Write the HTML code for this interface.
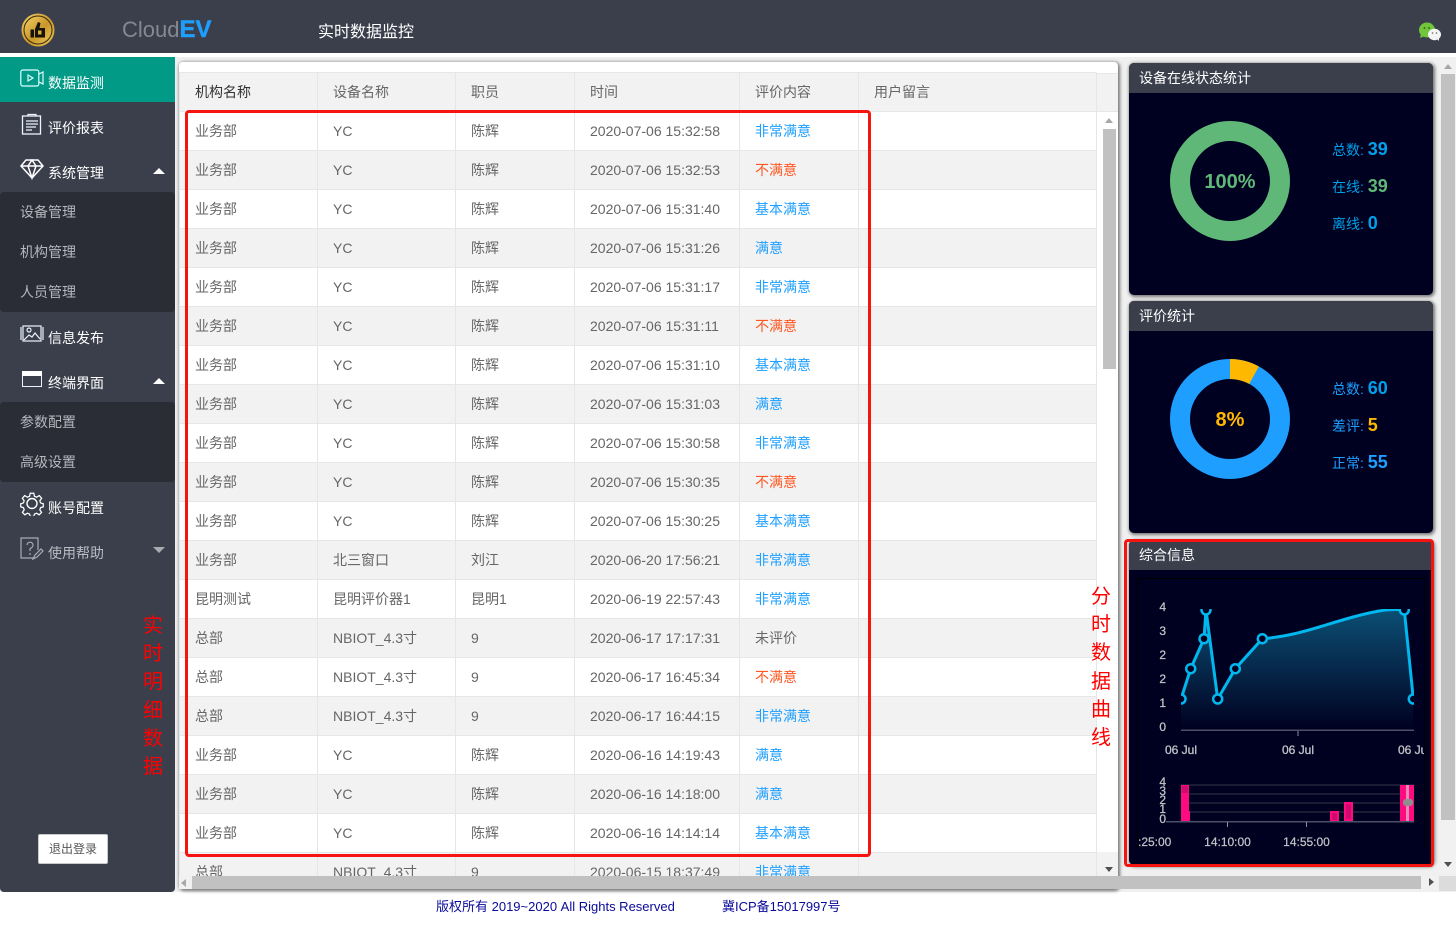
<!DOCTYPE html>
<html lang="zh-CN"><head><meta charset="utf-8"><title>CloudEV</title>
<style>
*{box-sizing:border-box}
html,body{margin:0;padding:0;width:1456px;height:927px;overflow:hidden;background:#fff}
body{position:relative;font:14px "Liberation Sans","Noto Sans CJK SC",sans-serif;color:#666}
.a{position:absolute;white-space:nowrap}
#hd{left:0;top:0;width:1456px;height:53px;background:#3b3f4c}
#main{left:0;top:57px;width:1456px;height:835px;background:#f0f0f0}
#side{left:0;top:57px;width:175px;height:835px;background:#3b3f4c;border-radius:0 0 4px 4px}
.it{left:48px;color:#fff;line-height:20px;font-size:14px;top:0}
.sub{left:20px;color:#b4b7be;line-height:20px;font-size:14px}
.dk{left:0;width:175px;background:#2a2c36;border-radius:4px}
.tri{width:0;height:0;border-left:6px solid transparent;border-right:6px solid transparent;left:153px}
.up{border-bottom:6px solid #fff}.dn{border-top:6px solid #a9abb2}
#panel{left:179px;top:62px;width:939px;height:827px;background:#fff;border-radius:4px;box-shadow:1px 1px 3px 1px #777}
#wrap{left:179px;top:72px;width:918px;height:804px;overflow:hidden}
table{border-collapse:separate;border-spacing:0;table-layout:fixed;width:918px;font-size:14px}
td,th{height:39px;padding:0 0 0 15px;border-right:1px solid #e6e6e6;border-bottom:1px solid #e6e6e6;text-align:left;font-weight:400;color:#666;white-space:nowrap;overflow:hidden}
td:first-child,th:first-child{border-left:1px solid #e6e6e6}
th{background:#f2f2f2;border-top:1px solid #e6e6e6;height:40px}
th:first-child{color:#333}
tr:nth-child(even) td{background:#f2f2f2}
.b{color:#1e9fff!important}.o{color:#ff5722!important}
.card{left:1129px;width:304px;background:#000020;border-radius:5px;box-shadow:1px 1px 3px 1px #777;overflow:hidden}
.card .h{height:30px;background:#3b3f4c;color:#fff;font-size:14px;line-height:30px;padding-left:10px}
.lb{left:1332px;font-size:14px;line-height:20px;color:#01a0ea}
.lb b{font-size:18px}
.r{color:#f00;font-size:20px;line-height:28.2px;width:22px;text-align:center;white-space:normal}
.sc{background:#c1c1c1}
</style></head><body>
<div class="a" id="hd"></div>
<svg class="a" style="left:20px;top:12px" width="36" height="36" viewBox="0 0 36 36"><defs><linearGradient id="gd" x1="0" y1="0" x2="1" y2="1"><stop offset="0" stop-color="#f3d166"/><stop offset=".55" stop-color="#c9962a"/><stop offset="1" stop-color="#efc95a"/></linearGradient></defs><circle cx="18" cy="18" r="16.500" fill="url(#gd)"/><circle cx="18" cy="18" r="14" fill="url(#gd)" stroke="#3a2c0c" stroke-width="1"/><path d="M10.500 17.500h3.500v8h-3.500zM15 17l3-7 2.500 1-1 5h5.500v9.500h-10z" fill="#17130a"/><rect x="18" y="18.500" width="3.500" height="4" fill="#d9ab38"/></svg>
<div class="a" style="left:122px;top:15px;font-size:22px;line-height:30px;color:#85888f">Cloud<b style="color:#1e9fff;font-size:24px;-webkit-text-stroke:.4px #1e9fff">EV</b></div>
<div class="a" style="left:318px;top:22px;font-size:16px;line-height:22px;color:#fff">实时数据监控</div>
<svg class="a" style="left:1418px;top:22px" width="24" height="20" viewBox="1418 22 24 20"><ellipse cx="1427" cy="30" rx="8" ry="7.500" fill="#72c63c"/><path d="M1421 34l-1 4 5-2z" fill="#72c63c"/><circle cx="1424.500" cy="28" r="1" fill="#3e6e1c"/><circle cx="1429" cy="28" r="1" fill="#3e6e1c"/><ellipse cx="1434.500" cy="34.500" rx="6.500" ry="5.700" fill="#f5f5f5"/><path d="M1437 39l2 2 0-4z" fill="#f5f5f5"/><circle cx="1432.500" cy="33" r=".8" fill="#666"/><circle cx="1436.500" cy="33" r=".8" fill="#666"/></svg>

<div class="a" id="main"></div>
<div class="a" id="side"></div>
<div class="a" style="left:0;top:57px;width:175px;height:45px;background:#009a87"></div>
<div class="a dk" style="top:192px;height:120px"></div>
<div class="a dk" style="top:402px;height:80px"></div>

<svg class="a" style="left:20px;top:68px" width="24" height="20" fill="none" stroke="#dff" stroke-width="1.2"><rect x=".8" y="2" width="18" height="16" rx="2"/><path d="M19 6l4-2v12l-4-2M8 7l5 3-5 3z"/></svg>
<div class="a it" style="top:73px">数据监测</div>
<svg class="a" style="left:21px;top:113px" width="22" height="22" fill="none" stroke="#e8f4ff" stroke-width="1.3"><rect x="1.500" y="3" width="18" height="18"/><path d="M7 3V1.500h8V3M5 8h12M5 11h12M5 14h10M5 17h6"/></svg>
<div class="a it" style="top:118px">评价报表</div>
<svg class="a" style="left:20px;top:158px" width="24" height="22" fill="none" stroke="#fff" stroke-width="1.500"><path d="M6 2h12l5 6-11 12L1 8zM1 8h22M8 8l4 12 4-12-4-6z"/></svg>
<div class="a it" style="top:163px">系统管理</div>
<div class="a tri up" style="top:168px"></div>
<div class="a sub" style="top:202px">设备管理</div>
<div class="a sub" style="top:242px">机构管理</div>
<div class="a sub" style="top:282px">人员管理</div>
<svg class="a" style="left:20px;top:325px" width="24" height="18" fill="none" stroke="#e8f4ff" stroke-width="1.200"><rect x="3" y="1" width="18" height="15"/><path d="M1 2v13M23 2v13M4 15l5-5 3 2 3-4 5 6"/><circle cx="9" cy="5" r="2"/></svg>
<div class="a it" style="top:328px">信息发布</div>
<svg class="a" style="left:22px;top:371px" width="20" height="16"><rect x=".5" y=".5" width="19" height="15" fill="none" stroke="#e8f4ff"/><rect x="0" y="0" width="20" height="5" fill="#fff"/></svg>
<div class="a it" style="top:373px">终端界面</div>
<div class="a tri up" style="top:378px"></div>
<div class="a sub" style="top:412px">参数配置</div>
<div class="a sub" style="top:452px">高级设置</div>
<svg class="a" style="left:20px;top:491px" width="24" height="25" viewBox="0 0 24 25" fill="none" stroke="#fff" stroke-width="1.400"><circle cx="12" cy="12.500" r="5"/><path d="M10 1h4l.7 3.400 2.400 1 3-1.800 2.600 3-2 2.800.8 2.400 3 .9v3.500l-3 .9-.8 2.400 2 2.800-2.800 2.700-2.800-1.800-2.400 1-.7 2.700h-4l-.7-2.700-2.400-1-2.800 1.800-2.800-2.700 2-2.800-.8-2.400-3-.9v-3.500l3-.9.8-2.400-2-2.800 2.600-3 3 1.800 2.400-1z" transform="translate(1.200 1.300) scale(.9)"/></svg>
<div class="a it" style="top:498px">账号配置</div>
<svg class="a" style="left:20px;top:537px" width="24" height="24" fill="none" stroke="#a4adb8" stroke-width="1.200"><path d="M18 13V1H1v20h12"/><path d="M7 8a3 3 0 1 1 4 3l-1 1v2M10 16v2M13 22l2-4 6-6 2 2-6 6z"/></svg>
<div class="a it" style="top:543px;color:#b9bcc2">使用帮助</div>
<div class="a tri dn" style="top:547px"></div>
<div class="a" style="left:38px;top:834px;width:70px;height:30px;background:#fff;border:1px solid #c9c9c9;border-radius:2px;font-size:12px;line-height:28px;text-align:center;color:#555">退出登录</div>
<div class="a r" style="left:142px;top:612px">实时明细数据</div>

<div class="a" id="panel"></div>
<div class="a" style="left:1097px;top:73px;width:21px;height:39px;background:#f2f2f2;border-top:1px solid #e6e6e6;border-bottom:1px solid #e6e6e6"></div>
<div class="a" id="wrap"><table>
<colgroup><col style="width:139px"><col style="width:138px"><col style="width:119px"><col style="width:165px"><col style="width:119px"><col style="width:238px"></colgroup>
<thead><tr><th style="padding-left:15px">机构名称</th><th>设备名称</th><th>职员</th><th>时间</th><th>评价内容</th><th>用户留言</th></tr></thead>
<tbody>
<tr><td>业务部</td><td>YC</td><td>陈辉</td><td>2020-07-06 15:32:58</td><td class="b">非常满意</td><td></td></tr>
<tr><td>业务部</td><td>YC</td><td>陈辉</td><td>2020-07-06 15:32:53</td><td class="o">不满意</td><td></td></tr>
<tr><td>业务部</td><td>YC</td><td>陈辉</td><td>2020-07-06 15:31:40</td><td class="b">基本满意</td><td></td></tr>
<tr><td>业务部</td><td>YC</td><td>陈辉</td><td>2020-07-06 15:31:26</td><td class="b">满意</td><td></td></tr>
<tr><td>业务部</td><td>YC</td><td>陈辉</td><td>2020-07-06 15:31:17</td><td class="b">非常满意</td><td></td></tr>
<tr><td>业务部</td><td>YC</td><td>陈辉</td><td>2020-07-06 15:31:11</td><td class="o">不满意</td><td></td></tr>
<tr><td>业务部</td><td>YC</td><td>陈辉</td><td>2020-07-06 15:31:10</td><td class="b">基本满意</td><td></td></tr>
<tr><td>业务部</td><td>YC</td><td>陈辉</td><td>2020-07-06 15:31:03</td><td class="b">满意</td><td></td></tr>
<tr><td>业务部</td><td>YC</td><td>陈辉</td><td>2020-07-06 15:30:58</td><td class="b">非常满意</td><td></td></tr>
<tr><td>业务部</td><td>YC</td><td>陈辉</td><td>2020-07-06 15:30:35</td><td class="o">不满意</td><td></td></tr>
<tr><td>业务部</td><td>YC</td><td>陈辉</td><td>2020-07-06 15:30:25</td><td class="b">基本满意</td><td></td></tr>
<tr><td>业务部</td><td>北三窗口</td><td>刘江</td><td>2020-06-20 17:56:21</td><td class="b">非常满意</td><td></td></tr>
<tr><td>昆明测试</td><td>昆明评价器1</td><td>昆明1</td><td>2020-06-19 22:57:43</td><td class="b">非常满意</td><td></td></tr>
<tr><td>总部</td><td>NBIOT_4.3寸</td><td>9</td><td>2020-06-17 17:17:31</td><td>未评价</td><td></td></tr>
<tr><td>总部</td><td>NBIOT_4.3寸</td><td>9</td><td>2020-06-17 16:45:34</td><td class="o">不满意</td><td></td></tr>
<tr><td>总部</td><td>NBIOT_4.3寸</td><td>9</td><td>2020-06-17 16:44:15</td><td class="b">非常满意</td><td></td></tr>
<tr><td>业务部</td><td>YC</td><td>陈辉</td><td>2020-06-16 14:19:43</td><td class="b">满意</td><td></td></tr>
<tr><td>业务部</td><td>YC</td><td>陈辉</td><td>2020-06-16 14:18:00</td><td class="b">满意</td><td></td></tr>
<tr><td>业务部</td><td>YC</td><td>陈辉</td><td>2020-06-16 14:14:14</td><td class="b">基本满意</td><td></td></tr>
<tr><td>总部</td><td>NBIOT_4.3寸</td><td>9</td><td>2020-06-15 18:37:49</td><td class="b">非常满意</td><td></td></tr>
</tbody></table></div>
<div class="a" style="left:1097px;top:852px;width:21px;height:24px;background:#f2f2f2"></div>
<div class="a sc" style="left:1103px;top:129px;width:13px;height:240px"></div>
<div class="a" style="left:1105px;top:118px;width:0;height:0;border:4px solid transparent;border-top:0;border-bottom:5px solid #a8a8a8"></div>
<div class="a" style="left:1105px;top:867px;width:0;height:0;border:4px solid transparent;border-bottom:0;border-top:5px solid #505050"></div>
<div class="a" style="left:179px;top:876px;width:939px;height:13px;background:#f1f1f1"></div>
<div class="a sc" style="left:192px;top:876px;width:1229px;height:13px"></div>
<div class="a" style="left:181px;top:879px;width:0;height:0;border:4px solid transparent;border-left:0;border-right:5px solid #a8a8a8"></div>
<div class="a" style="left:1421px;top:876px;width:18px;height:13px;background:#f1f1f1"></div>
<div class="a" style="left:1429px;top:878px;width:0;height:0;border:4px solid transparent;border-right:0;border-left:5px solid #505050"></div>
<div class="a" style="left:1439px;top:876px;width:17px;height:15px;background:#dcdcdc"></div>
<div class="a r" style="left:1090px;top:583px">分时数据曲线</div>

<div class="a" style="left:1441px;top:57px;width:15px;height:819px;background:#f1f1f1"></div>
<div class="a sc" style="left:1441px;top:74px;width:14px;height:746px"></div>
<div class="a" style="left:1444px;top:64px;width:0;height:0;border:4px solid transparent;border-top:0;border-bottom:5px solid #a8a8a8"></div>
<div class="a" style="left:1444px;top:862px;width:0;height:0;border:4px solid transparent;border-bottom:0;border-top:5px solid #505050"></div>

<div class="a card" style="top:63px;height:232px"><div class="h">设备在线状态统计</div></div>
<svg class="a" style="left:1170px;top:121px" width="120" height="120"><circle cx="60" cy="60" r="50" fill="none" stroke="#5fb878" stroke-width="20"/><text x="60" y="67" text-anchor="middle" font-family="Liberation Sans" font-weight="700" font-size="20" fill="#5fb878">100%</text></svg>
<div class="a lb" style="top:139px">总数: <b>39</b></div>
<div class="a lb" style="top:176px">在线: <b style="color:#5fb878">39</b></div>
<div class="a lb" style="top:213px">离线: <b>0</b></div>

<div class="a card" style="top:301px;height:232px"><div class="h">评价统计</div></div>
<svg class="a" style="left:1170px;top:359px" width="120" height="120"><circle cx="60" cy="60" r="50" fill="none" stroke="#1e9fff" stroke-width="20"/><path d="M60 10A50 50 0 0 1 84 16.200" fill="none" stroke="#ffb800" stroke-width="20"/><text x="60" y="67" text-anchor="middle" font-family="Liberation Sans" font-weight="700" font-size="20" fill="#ffb800">8%</text></svg>
<div class="a lb" style="top:378px;color:#1e9fff">总数: <b style="color:#01a0ea">60</b></div>
<div class="a lb" style="top:415px;color:#1e9fff">差评: <b style="color:#ffb800">5</b></div>
<div class="a lb" style="top:452px;color:#1e9fff">正常: <b>55</b></div>

<div class="a card" style="top:540px;height:325px"><div class="h">综合信息</div></div>
<svg class="a" style="left:1129px;top:570px" width="304" height="290" viewBox="1129 570 304 290" font-family="Liberation Sans" fill="#c4c4c8">
<defs><linearGradient id="g" x1="0" y1="0" x2="0" y2="1"><stop offset="0" stop-color="#0b4f74"/><stop offset="1" stop-color="#000020"/></linearGradient>
<clipPath id="c"><rect x="1181" y="609" width="233" height="125"/></clipPath>
<clipPath id="c2"><rect x="1138" y="575" width="286" height="290"/></clipPath></defs>
<path d="M1137.500 848V578.500H1424.500V848" fill="none" stroke="#000"/>
<g font-size="12" text-anchor="end" stroke="#c4c4c8" stroke-width=".25"><text x="1166" y="611">4</text><text x="1166" y="635">3</text><text x="1166" y="659">2</text><text x="1166" y="683">2</text><text x="1166" y="707">1</text><text x="1166" y="731">0</text></g>
<g clip-path="url(#c)">
<path d="M1181 699L1190.700 668.700L1204 638.700L1206 610L1217.700 699L1235.300 668.700L1262.300 638.700C1300 636 1330 622 1365 614C1385 609 1395 609 1404.300 610L1413.300 699V730H1181Z" fill="url(#g)"/>
<path d="M1181 699L1190.700 668.700L1204 638.700L1206 610L1217.700 699L1235.300 668.700L1262.300 638.700C1300 636 1330 622 1365 614C1385 609 1395 609 1404.300 610L1413.300 699" fill="none" stroke="#00b7ee" stroke-width="3"/>
<g fill="#000020" stroke="#00b7ee" stroke-width="2.500"><circle cx="1181" cy="699" r="4.500"/><circle cx="1190.700" cy="668.700" r="4.500"/><circle cx="1204" cy="638.700" r="4.500"/><circle cx="1206" cy="610" r="4.500"/><circle cx="1217.700" cy="699" r="4.500"/><circle cx="1235.300" cy="668.700" r="4.500"/><circle cx="1262.300" cy="638.700" r="4.500"/><circle cx="1404.300" cy="610" r="4.500"/><circle cx="1413.300" cy="699" r="4.500"/></g>
</g>
<rect x="1181" y="729.500" width="233" height="1.500" fill="#4a5166"/><rect x="1297.500" y="731" width="1" height="5" fill="#8a91a3"/>
<g clip-path="url(#c2)" font-size="12" text-anchor="middle" stroke="#c4c4c8" stroke-width=".3"><text x="1181" y="754">06 Jul</text><text x="1298" y="754">06 Jul</text><text x="1414" y="754">06 Jul</text></g>
<g font-size="12" text-anchor="end" stroke="#c4c4c8" stroke-width=".25"><text x="1166" y="786">4</text><text x="1166" y="795">3</text><text x="1166" y="804">2</text><text x="1166" y="813">1</text><text x="1166" y="823">0</text></g>
<path d="M1181 785H1414M1181 794H1414M1181 803H1414M1181 812H1414" stroke="#33364a"/>
<g fill="#ff0a80"><rect x="1181" y="785" width="8" height="36"/><rect x="1189" y="811" width="1" height="10"/><rect x="1330" y="811" width="9" height="10"/><rect x="1344" y="802" width="9" height="19"/><rect x="1400" y="785" width="14" height="36"/></g>
<g fill="#d10a6e"><rect x="1182" y="786" width="6" height="7"/><rect x="1332" y="813" width="5" height="7"/><rect x="1346" y="804" width="5" height="15"/></g>
<rect x="1406" y="785" width="3" height="36" fill="#e88ab8"/><rect x="1403" y="799" width="10" height="7" rx="3" fill="#8f8f8f"/>
<rect x="1166" y="821" width="248" height="1.500" fill="#4a5166"/><rect x="1227" y="822" width="1" height="5" fill="#8a91a3"/><rect x="1306" y="822" width="1" height="5" fill="#8a91a3"/>
<g clip-path="url(#c2)" font-size="12" text-anchor="middle" stroke="#c4c4c8" stroke-width=".2"><text x="1148" y="846">14:25:00</text><text x="1227.500" y="846">14:10:00</text><text x="1306.500" y="846">14:55:00</text></g>
</svg>

<div class="a" style="left:185px;top:110px;width:686px;height:747px;border:3px solid #f5140f;border-radius:4px"></div>
<div class="a" style="left:1124px;top:539px;width:310px;height:328px;border:3px solid #f5140f;border-radius:4px"></div>
<div class="a" style="left:436px;top:898px;font-size:13px;line-height:17px;color:#0a0a9a">版权所有 2019~2020 All Rights Reserved</div>
<div class="a" style="left:722px;top:898px;font-size:13px;line-height:17px;color:#0a0a9a">冀ICP备15017997号</div>
</body></html>
